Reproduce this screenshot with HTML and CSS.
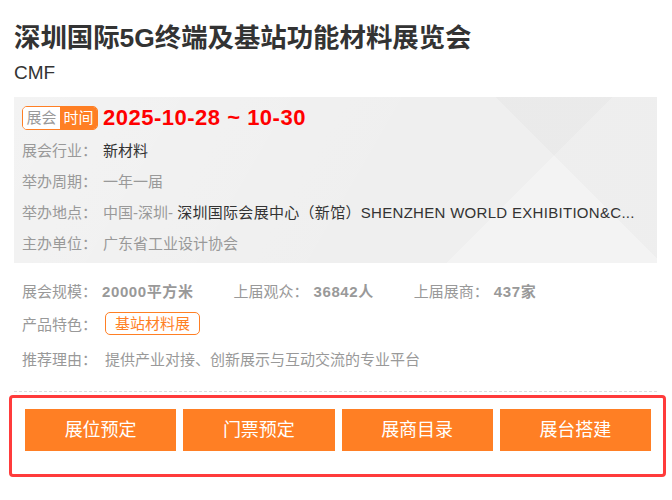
FILE: index.html
```html
<!DOCTYPE html>
<html lang="zh">
<head>
<meta charset="utf-8">
<title>深圳国际5G终端及基站功能材料展览会</title>
<link rel="stylesheet" href="styles.css">
</head>
<body>
<div class="page">
  <h1 class="title">深圳国际5G终端及基站功能材料展览会</h1>
  <div class="subtitle">CMF</div>

  <div class="info-box">
    <div class="date-row">
      <span class="tag"><span class="tag-l">展会</span><span class="tag-r">时间</span></span>
      <span class="date">2025-10-28 ~ 10-30</span>
    </div>
    <div class="row"><span class="label">展会行业：</span><span class="val dark">新材料</span></div>
    <div class="row"><span class="label">举办周期：</span><span class="val">一年一届</span></div>
    <div class="row"><span class="label">举办地点：</span><span class="val">中国-深圳- <span class="dark venue">深圳国际会展中心（新馆）SHENZHEN WORLD EXHIBITION&amp;C...</span></span></div>
    <div class="row"><span class="label">主办单位：</span><span class="val">广东省工业设计协会</span></div>
  </div>

  <div class="stats">
    <div class="stat"><span class="label">展会规模：</span><b class="num">20000平方米</b></div>
    <div class="stat"><span class="label">上届观众：</span><b class="num">36842人</b></div>
    <div class="stat"><span class="label">上届展商：</span><b class="num">437家</b></div>
  </div>
  <div class="row2"><span class="label">产品特色：</span><span class="feature">基站材料展</span></div>
  <div class="row2 reason"><span class="label">推荐理由：</span><span class="val">提供产业对接、创新展示与互动交流的专业平台</span></div>

  <div class="divider"></div>

  <div class="actions">
    <a class="btn">展位预定</a>
    <a class="btn">门票预定</a>
    <a class="btn">展商目录</a>
    <a class="btn">展台搭建</a>
  </div>
</div>
</body>
</html>
```

FILE: styles.css
```css
* { box-sizing: border-box; }
html, body { margin: 0; padding: 0; background: #fff; }
body {
  font-family: "Liberation Sans", "Noto Sans CJK SC", sans-serif;
  color: #333;
  width: 672px;
}
.page {
  padding: 18px 15px 0 14px;
}
.title {
  margin: 0;
  font-size: 26.4px;
  line-height: 40px;
  font-weight: bold;
  color: #333;
}
.subtitle {
  font-size: 19px;
  line-height: 30px;
  color: #333;
  margin-bottom: 9px;
}
.info-box {
  padding: 9px 20px 4px 8px;
  background-color: #efefef;
  background-image:
    linear-gradient(45deg, rgba(0,0,0,0) 80%, rgba(0,0,0,0.018) 80%),
    linear-gradient(135deg, rgba(0,0,0,0) 74%, rgba(255,255,255,0.25) 74%),
    linear-gradient(120deg, rgba(255,255,255,0.25) 0%, rgba(255,255,255,0) 60%);
}
.date-row {
  display: flex;
  align-items: center;
  height: 24px;
  margin-bottom: 5px;
}
.tag {
  display: inline-flex;
  border: 1px solid #ff7f24;
  border-radius: 5px;
  overflow: hidden;
  font-size: 15px;
  line-height: 22px;
}
.tag-l { background: #fff; color: #999; padding: 0 3.5px; }
.tag-r { background: #ff7f24; color: #fff; padding: 0 3.5px; }
.date {
  margin-left: 5px;
  color: #ff0000;
  font-size: 22px;
  font-weight: bold;
  letter-spacing: 0.5px;
}
.row {
  display: flex;
  font-size: 15px;
  line-height: 31px;
  white-space: nowrap;
}
.label { color: #999; flex: none; width: 81px; }
.val {
  color: #999;
  white-space: nowrap;
}
.dark { color: #333; }
.venue { letter-spacing: 0.3px; }
.stats {
  display: flex;
  margin-top: 14px;
  padding-left: 8px;
  font-size: 15px;
  line-height: 30px;
}
.stat { display: flex; margin-right: 40px; }
.stat .label { width: 80px; }
.num { color: #999; font-weight: bold; letter-spacing: 0.6px; }
.row2 {
  display: flex;
  align-items: center;
  padding-left: 8px;
  font-size: 15px;
  height: 30px;
  margin-top: 1px;
}
.row2 .label { width: 83px; }
.feature {
  display: inline-block;
  border: 1px solid #ff7f24;
  border-radius: 5px;
  color: #ff7f24;
  line-height: 21px;
  padding: 0 9px;
}
.reason { margin-top: 5px; }
.divider {
  border-top: 1px dashed #dcdcdc;
  margin-top: 18px;
}
.actions {
  display: flex;
  gap: 7px;
  margin: 3px -9px 0 -5px;
  border: 3px solid #ff3b3b;
  border-radius: 4px;
  padding: 11px 12px 23px 13px;
}
.btn {
  flex: 1;
  height: 42px;
  background: #ff7f24;
  color: #fff;
  font-size: 18px;
  line-height: 42px;
  text-align: center;
  text-decoration: none;
}
```
